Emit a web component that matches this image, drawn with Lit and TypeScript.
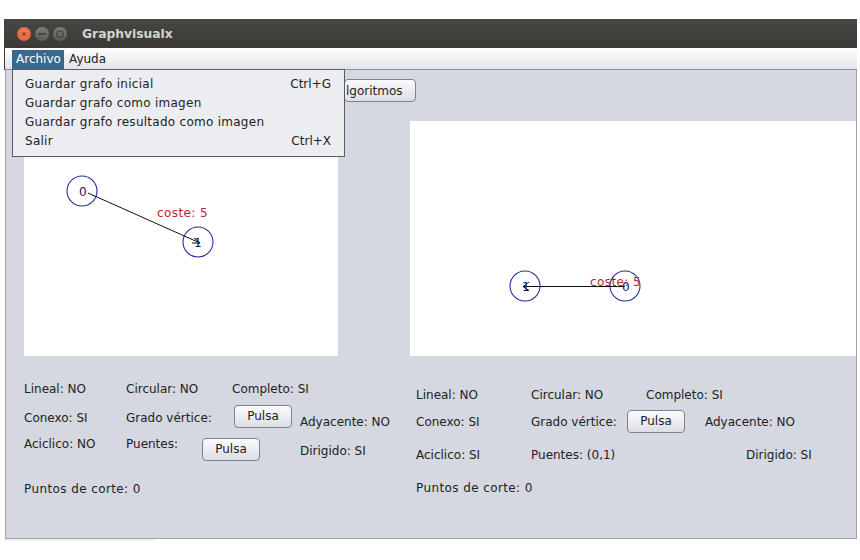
import { LitElement, html, css } from "lit";
import { customElement } from "lit/decorators.js";

@customElement("app-root")
export class AppRoot extends LitElement {
  static styles = css`
    :host { display: block; width: 860px; height: 560px; background: #fff; overflow: hidden; font-family: "DejaVu Sans", sans-serif; font-size: 12px; color: #222; }
    .page { padding: 19px 3px 0 5px; position: relative; height: 541px; box-sizing: border-box; }
    .win { display: flex; flex-direction: column; height: 522px; }
    .title { height: 29px; flex: none; display: flex; align-items: center; margin-left: -1px; background: linear-gradient(#474642, #3b3a36); color: #d5d2cb; font-weight: bold; font-size: 12.3px; padding-left: 13px; }
    .dots { display: flex; gap: 4px; width: 65px; }
    .dot { width: 14px; height: 14px; border-radius: 50%; display: flex; align-items: center; justify-content: center; }
    .close { background: radial-gradient(circle at 50% 40%, #f0845a, #d8562a); }
    .min, .max { background: linear-gradient(#7e7c76, #5c5a55); }
    .dot svg { display: block; }
    .menubar { flex: none; display: flex; padding-left: 7px; background: linear-gradient(#ffffff, #e2e4ea); border-bottom: 1px solid #8d909e; box-sizing: border-box; height: 22px; box-shadow: -1px 0 0 #3d3b37; }
    .mi { line-height: 19px; margin-top: 2px; height: 19px; font-size: 12px; color: #222; }
    .mi.on { background: #39698f; color: #fff; width: 52px; box-sizing: border-box; padding-left: 4px; }
    .mi.off { padding-left: 5px; }
    .content { flex: none; height: 469px; background: #d5d8e0; border-right: 1px solid #a5a5a5; border-bottom: 1px solid #a5a5a5; border-left: 1px solid #a5a5a5; display: flex; flex-direction: column; box-sizing: border-box; }
    .toolbar { height: 51px; flex: none; display: flex; padding: 9px 0 0 338px; box-sizing: border-box; }
    .btn { box-sizing: border-box; font: inherit; color: #222; border: 1px solid #7f828c; border-radius: 4px; background: linear-gradient(#fbfbfc, #dcdee5); padding: 0; height: 23px; width: 58px; display: flex; align-items: center; justify-content: center; flex: none; }
    .btn.alg { width: 72px; justify-content: flex-start; padding-left: 1px; }
    .canvases { display: flex; height: 235px; flex: none; padding-left: 18px; }
    .c1 { width: 314px; background: #fff; }
    .c2 { width: 446px; margin-left: 72px; background: #fff; }
    svg.g { display: block; width: 100%; height: 100%; }
    svg.g text { font-family: "DejaVu Sans", sans-serif; font-size: 12px; }
    .n { fill: none; stroke: #2c2c9c; stroke-width: 1.1; }
    .nt { fill: #14146e; }
    .e { stroke: #111; stroke-width: 1; fill: none; }
    .ct { fill: #b8282c; letter-spacing: 0.4px; }
    .panels { display: flex; padding-left: 18px; }
    .p1 { width: 392px; padding-top: 25px; }
    .p2 { padding-top: 32px; }
    .row { display: flex; align-items: flex-start; height: 15px; line-height: 15px; white-space: nowrap; }
    .p1 .row, .p2 .r2, .p2 .r3 { line-height: 17px; }
    .a { width: 102px; } .b1 { width: 106px; }
    .p2 .a { width: 115px; } .p2 .b1 { width: 115px; }
    .r2 { height: 23px; margin-top: 9px; }
    .tl { margin-top: 5px; }
    .gl { width: 108px; }
    .p2 .gl { width: 96px; }
    .adj { margin: 9px 0 0 8px; }
    .p2 .r2 { margin-top: 7px; }
    .p2 .tl { margin-top: 4px; }
    .p2 .adj { margin: 4px 0 0 20px; }
    .r3 { height: 23px; margin-top: 10px; }
    .s { margin-top: -2px; }
    .pu { width: 76px; }
    .dir { margin: 5px 0 0 40px; }
    .p2 .r3 { margin-top: 14px; height: 15px; }
    .bridges { width: 215px; }
    .r4 { margin-top: 20px; letter-spacing: 0.4px; }
    .p2 .r4 { margin-top: 19px; }
    .menu { position: absolute; left: 12px; top: 69px; width: 333px; height: 88px; box-sizing: border-box; background: #ecedf1; border: 1px solid #5c5c60; padding: 5px 13px 0 12px; }
    .item { height: 19px; line-height: 19px; display: flex; justify-content: space-between; white-space: nowrap; letter-spacing: 0.27px; }
    .key { letter-spacing: 0; }
    .footer { height: 2px; width: 150px; background: #f1f1f1; margin-left: -1px; }
  `;

  render() {
    return html`<div class="page">
      <div class="win">
        <div class="title">
          <div class="dots">
            <div class="dot close"><svg width="8" height="8" viewBox="0 0 8 8"><path d="M2 2l4 4M6 2l-4 4" stroke="#7a2a10" stroke-width="1"/></svg></div>
            <div class="dot min"><svg width="8" height="8" viewBox="0 0 8 8"><path d="M0 4h8" stroke="#3c3b37" stroke-width="1.5"/></svg></div>
            <div class="dot max"><svg width="8" height="8" viewBox="0 0 8 8"><rect x="1" y="1" width="6" height="6" rx="1" fill="none" stroke="#3c3b37" stroke-width="1"/></svg></div>
          </div>
          <span>Graphvisualx</span>
        </div>
        <div class="menubar">
          <div class="mi on">Archivo</div>
          <div class="mi off">Ayuda</div>
        </div>
        <div class="content">
          <div class="toolbar"><div class="btn alg">lgoritmos</div></div>
          <div class="canvases">
            <div class="c1">
              <svg class="g" viewBox="0 0 314 235">
                <circle class="n" cx="58" cy="70" r="15"/>
                <circle class="n" cx="174" cy="121" r="15"/>
                <path class="e" d="M64 72L176 122M170 117l6 5l-8 0"/>
                <text class="nt" x="55" y="75">0</text>
                <text class="nt" x="170" y="126">1</text>
                <text class="ct" x="133" y="96">coste: 5</text>
              </svg>
            </div>
            <div class="c2">
              <svg class="g" viewBox="0 0 446 235">
                <circle class="n" cx="115" cy="165" r="15"/>
                <circle class="n" cx="215" cy="165" r="15"/>
                <path class="e" d="M113 165.5H215M119 161l-6 4.5l6 4"/>
                <text class="nt" x="112" y="170">1</text>
                <text class="nt" x="212" y="170">0</text>
                <text class="ct" x="180" y="165">coste: 5</text>
              </svg>
            </div>
          </div>
          <div class="panels">
            <div class="p1">
              <div class="row"><span class="a">Lineal: NO</span><span class="b1">Circular: NO</span><span>Completo: SI</span></div>
              <div class="row r2"><span class="a tl">Conexo: SI</span><span class="gl tl">Grado vértice:</span><div class="btn">Pulsa</div><span class="adj">Adyacente: NO</span></div>
              <div class="row r3"><span class="a s">Aciclico: NO</span><span class="pu s">Puentes:</span><div class="btn">Pulsa</div><span class="dir">Dirigido: SI</span></div>
              <div class="row r4">Puntos de corte: 0</div>
            </div>
            <div class="p2">
              <div class="row"><span class="a">Lineal: NO</span><span class="b1">Circular: NO</span><span>Completo: SI</span></div>
              <div class="row r2"><span class="a tl">Conexo: SI</span><span class="gl tl">Grado vértice:</span><div class="btn">Pulsa</div><span class="adj">Adyacente: NO</span></div>
              <div class="row r3"><span class="a">Aciclico: SI</span><span class="bridges">Puentes: (0,1)</span><span>Dirigido: SI</span></div>
              <div class="row r4">Puntos de corte: 0</div>
            </div>
          </div>
        </div>
        <div class="footer"></div>
      </div>
      <div class="menu">
        <div class="item"><span>Guardar grafo inicial</span><span class="key">Ctrl+G</span></div>
        <div class="item"><span>Guardar grafo como imagen</span></div>
        <div class="item"><span>Guardar grafo resultado como imagen</span></div>
        <div class="item"><span>Salir</span><span class="key">Ctrl+X</span></div>
      </div>
    </div>`;
  }
}
